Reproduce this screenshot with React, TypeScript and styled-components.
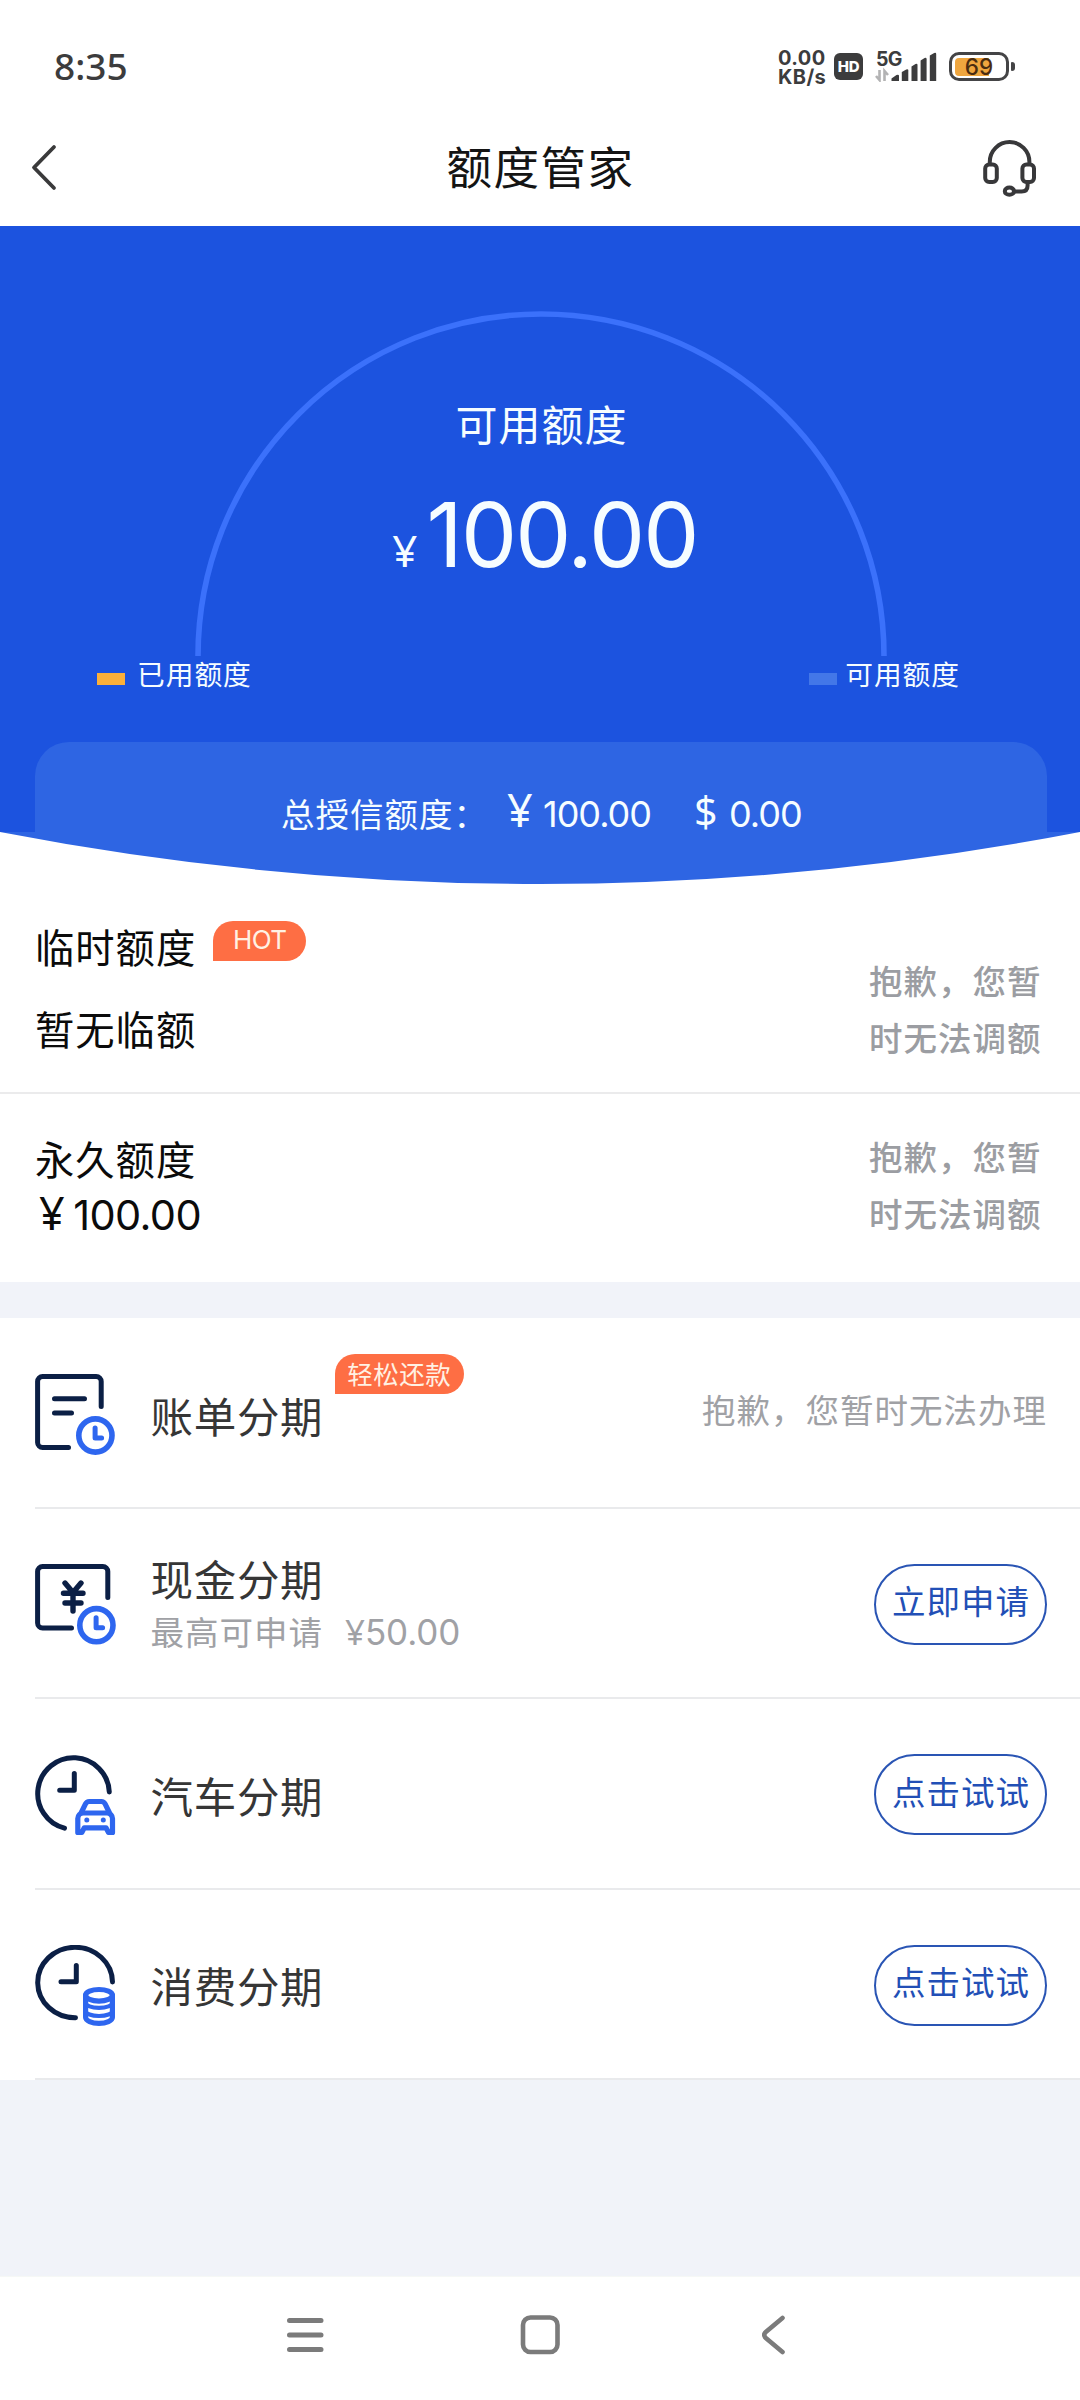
import React from "react";
import styled, { createGlobalStyle } from "styled-components";

const cjk = `"Noto Sans CJK SC", "Noto Sans", sans-serif`;
const latin = `Inter, "Noto Sans", "Noto Sans CJK SC", sans-serif`;

const GlobalStyle = createGlobalStyle`
  * { box-sizing: border-box; }
  body { margin: 0; background: #f1f3f9; }
  svg { display: block; flex: none; }
`;

const Screen = styled.div`
  width: 1080px;
  height: 2400px;
  display: flex;
  flex-direction: column;
  background: #f1f3f9;
  font-family: ${cjk};
  overflow: hidden;
`;

/* ---------- status bar ---------- */
const StatusBar = styled.header`
  height: 112px;
  flex: none;
  display: flex;
  justify-content: space-between;
  background: #fff;
  padding: 45px 65px 0 54px;
  font-family: ${latin};
  color: #3c3c3d;
`;
const Clock = styled.time`
  font: 500 37px/42px "Noto Sans", sans-serif;
`;
const StatusIcons = styled.div`
  display: flex;
  align-items: flex-start;
  height: 44px;
`;
const NetSpeed = styled.div`
  width: 56px;
  padding-top: 4px;
  font: 700 20px/19px ${latin};
  letter-spacing: 0.4px;
  white-space: pre-line;
`;
const HdBadge = styled.div`
  width: 29px;
  height: 27px;
  margin: 8px 12px 0 0;
  border-radius: 6px;
  background: #3c3c3d;
  color: #fff;
  font: 800 15px/27px ${latin};
  letter-spacing: -0.3px;
  text-align: center;
`;
const Signal = styled.div`
  width: 63px;
  display: grid;
  margin-top: 5px;
  margin-right: 11px;
  > * { grid-area: 1 / 1; }
`;
const NetType = styled.span`
  padding-left: 1px;
  font: 700 19.5px/18px ${latin};
  letter-spacing: -0.6px;
`;
const Battery = styled.div`
  display: flex;
  align-items: center;
  gap: 2px;
  margin-top: 7px;
`;
const BatteryShell = styled.div`
  width: 60px;
  height: 29px;
  border: 3px solid #444446;
  border-radius: 10px;
  padding: 3px;
  display: grid;
  > * { grid-area: 1 / 1; }
`;
const BatteryFill = styled.div`
  width: 34px;
  border-radius: 4px 0 0 4px;
  background: #efa63f;
`;
const BatteryText = styled.span`
  text-align: center;
  font: 500 22.5px/18px ${latin};
  color: #4a2c10;
`;
const BatteryNub = styled.div`
  width: 4px;
  height: 9px;
  border-radius: 1px 3px 3px 1px;
  background: #444446;
`;

/* ---------- title bar ---------- */
const TitleBar = styled.nav`
  height: 114px;
  flex: none;
  display: flex;
  align-items: flex-start;
  justify-content: space-between;
  background: #fff;
  padding: 28px 43px 0 31px;
`;
const TitleSide = styled.div<{ $end?: boolean; $drop: number }>`
  width: 60px;
  display: flex;
  justify-content: ${(p) => (p.$end ? "flex-end" : "flex-start")};
  padding-top: ${(p) => p.$drop}px;
`;
const Title = styled.h1`
  margin: 0 0 0 13px;
  font: 400 45.5px/50px ${cjk};
  letter-spacing: 1.5px;
  color: #141414;
`;

/* ---------- hero ---------- */
const Hero = styled.section`
  height: 658px;
  flex: none;
  display: flex;
  flex-direction: column;
  background: #1c53df;
  color: #f6fdff;
`;
const Gauge = styled.div`
  width: 692px;
  height: 345px;
  margin: 85px 0 0 195px;
  display: grid;
  > * { grid-area: 1 / 1; }
`;
const GaugeText = styled.div`
  display: flex;
  flex-direction: column;
  align-items: center;
  padding-top: 82px;
`;
const GaugeLabel = styled.div`
  font: 400 42px/60px ${cjk};
  letter-spacing: 1px;
  margin-left: 1px;
`;
const GaugeAmount = styled.div`
  display: flex;
  align-items: baseline;
  gap: 9px;
  margin: 37px 0 0 8px;
  font: 400 89px/90px ${latin};
  letter-spacing: -1.8px;
`;
const GaugeSign = styled.span`
  font: 400 44px/44px "Noto Sans", sans-serif;
  letter-spacing: 0;
`;
const Legend = styled.div`
  height: 36px;
  display: flex;
  justify-content: space-between;
  padding: 0 120px 0 97px;
`;
const LegendItem = styled.div<{ $gap: number }>`
  display: flex;
  align-items: center;
  gap: ${(p) => p.$gap}px;
  font: 400 27.7px/34px ${cjk};
  letter-spacing: 1px;
`;
const LegendLabel = styled.span`
  padding-bottom: 2px;
`;
const Swatch = styled.i<{ $color: string }>`
  width: 28px;
  height: 12px;
  margin-top: 10px;
  background: ${(p) => p.$color};
`;
const TotalPanel = styled.div`
  width: 1012px;
  height: 90px;
  margin: 50px 0 0 35px;
  border-radius: 34px 34px 0 0;
  background: #2e65e3;
  padding: 47px 0 0 246px;
  display: flex;
  align-items: baseline;
  white-space: nowrap;
`;
const TotalLabel = styled.span`
  width: 226px;
  font: 400 33.5px/44px ${cjk};
  letter-spacing: 1px;
`;
const TotalSign = styled.span<{ $width: number; $size: number }>`
  width: ${(p) => p.$width}px;
  font: 400 ${(p) => p.$size}px/42px "Noto Sans", sans-serif;
`;
const TotalValue = styled.span<{ $width: number }>`
  width: ${(p) => p.$width}px;
  font: 400 36px/44px ${latin};
  letter-spacing: -1px;
`;

/* ---------- credit rows ---------- */
const CreditRow = styled.section<{ $height: number; $line?: boolean }>`
  height: ${(p) => p.$height}px;
  flex: none;
  display: flex;
  justify-content: space-between;
  background: #fff;
  padding: 0 36px 0 35px;
  border-bottom: ${(p) => (p.$line ? "2px solid #ebebec" : "none")};
`;
const CreditInfo = styled.div<{ $top: number; $gap: number }>`
  display: flex;
  flex-direction: column;
  gap: ${(p) => p.$gap}px;
  padding-top: ${(p) => p.$top}px;
`;
const CreditHead = styled.div`
  display: flex;
`;
const CreditText = styled.div`
  font: 400 39.3px/56px ${cjk};
  letter-spacing: 1px;
  color: #0b0b0b;
`;
const CreditAmount = styled.div`
  display: flex;
  align-items: baseline;
  gap: 9px;
  padding-left: 4px;
  font: 400 41.5px/56px ${latin};
  letter-spacing: -0.6px;
  color: #0b0b0b;
`;
const Yen = styled.span<{ $size: number }>`
  font: 400 ${(p) => p.$size}px/1 "Noto Sans", sans-serif;
`;
const Tag = styled.span<{ $width: number; $latin?: boolean }>`
  width: ${(p) => p.$width}px;
  height: 40px;
  flex: none;
  border-radius: 20px 20px 20px 0;
  background: #fe6e44;
  color: #fff1e3;
  text-align: center;
  font: ${(p) => (p.$latin ? `400 26px/38px ${latin}` : `400 25.5px/37px ${cjk}`)};
  letter-spacing: ${(p) => (p.$latin ? "-0.6px" : "0.5px")};
`;
const HeadTag = styled(Tag)`
  margin: 3px 0 0 17px;
`;
const Sorry = styled.p<{ $top: number }>`
  width: 175px;
  margin: ${(p) => p.$top}px 0 0;
  font: 500 33.5px/57px ${cjk};
  letter-spacing: 1px;
  color: #9b9da2;
`;

/* ---------- instalment list ---------- */
const List = styled.section`
  flex: none;
  margin-top: 36.4px;
  background: #fff;
`;
const Row = styled.div`
  height: 190.4px;
  padding-left: 35px;
`;
const RowBody = styled.div`
  height: 100%;
  display: flex;
  align-items: center;
  padding: 3px 33px 0 0;
  border-bottom: 2px solid #e9eaec;
`;
const RowText = styled.div<{ $shift: number }>`
  margin: ${(p) => p.$shift}px auto 0 34.5px;
`;
const RowTitle = styled.h2`
  margin: 0;
  display: flex;
  font: 400 42.5px/54px ${cjk};
  letter-spacing: 0.7px;
  color: #363636;
`;
const RowTag = styled(Tag)`
  margin: -34px 0 0 11.5px;
`;
const RowSub = styled.div`
  display: flex;
  align-items: baseline;
  margin-top: 1px;
  font: 400 33.5px/50px ${cjk};
  letter-spacing: 1px;
  color: #a0a1a5;
`;
const SubAmount = styled.span`
  margin-left: 22px;
  font: 400 35px/40px ${latin};
  letter-spacing: -0.1px;
`;
const RowNote = styled.span`
  margin-top: -11px;
  font: 400 33.5px/50px ${cjk};
  letter-spacing: 1px;
  color: #a0a1a5;
`;
const Pill = styled.button`
  width: 173px;
  height: 81px;
  padding: 0 0 8px 1px;
  border: 2px solid #2a55b4;
  border-radius: 41px;
  background: #fff;
  font: 400 33.5px/50px ${cjk};
  letter-spacing: 1px;
  color: #224fb6;
`;

/* ---------- system navigation ---------- */
const SystemNav = styled.footer`
  height: 124px;
  margin-top: auto;
  flex: none;
  display: flex;
  justify-content: space-between;
  background: #fff;
  border-top: 1px solid #f6f8f6;
  padding: 38px 293px 0 286px;
`;
const HomeSlot = styled.div`
  margin-right: 6px;
`;

const navy = "#0b1f45";
const blue = "#2e66ef";

const MiniClock = ({ x, y }: { x: number; y: number }) => (
  <g stroke={blue} fill="none" strokeLinecap="round" strokeLinejoin="round">
    <circle cx={x} cy={y} r="16.6" strokeWidth="5.6" />
    <path d={`M${x - 0.3} ${y - 7.5}v10h6.500`} strokeWidth="5" />
  </g>
);

const RowSvg = ({ children }: { children: React.ReactNode }) => (
  <svg width="81" height="81" viewBox="0 0 81 81" fill="none" stroke={navy} strokeWidth="5" strokeLinecap="round" strokeLinejoin="round">
    {children}
  </svg>
);

const BillIcon = () => (
  <RowSvg>
    <path d="M66.2 32.500V7.500a5 5 0 0 0-5-5H7.600a5 5 0 0 0-5 5v61a5 5 0 0 0 5 5H33.500" />
    <path d="M19.500 24.700h30M19.500 39h17" />
    <MiniClock x={60.4} y={61.5} />
  </RowSvg>
);

const CashIcon = () => (
  <RowSvg>
    <path d="M72.800 33.500V7.500a5 5 0 0 0-5-5H7.600a5 5 0 0 0-5 5V59a5 5 0 0 0 5 5H36.500" />
    <path d="M30 19l8 9.500L46 19M28.500 29.300h19.500M30 39h16M38 29.300V47" strokeWidth="5.400" />
    <MiniClock x={61.4} y={61.2} />
  </RowSvg>
);

const CarIcon = () => (
  <RowSvg>
    <path d="M74.300 38A35.800 35.800 0 1 0 29.500 74.200" />
    <path d="M39.300 19.500v16.800H24.700" />
    <g stroke={blue} strokeWidth="5.200">
      <path d="M46.300 58.500l4.200-8.600q1.200-2.400 3.800-2.400h12q2.600 0 3.800 2.400l4.200 8.600" />
      <path d="M42.800 78.400V64.500a5.500 5.500 0 0 1 5.500-5.500h23.700a5.500 5.500 0 0 1 5.500 5.500v13.900h-4L71 73.800H49.300l-2.500 4.600z" />
    </g>
    <circle cx="51.800" cy="66" r="2.500" fill={blue} stroke="none" />
    <circle cx="68.300" cy="66" r="2.500" fill={blue} stroke="none" />
  </RowSvg>
);

const CoinsIcon = () => (
  <RowSvg>
    <path d="M77.500 37A37.400 35.200 0 1 0 40.500 72.700" />
    <path d="M41.300 20.500v16.200H26" />
    <g stroke={blue} strokeWidth="5.200">
      <ellipse cx="64" cy="50.300" rx="13.400" ry="5.800" />
      <path d="M50.600 50.300v22c0 3.400 6 6 13.400 6s13.400-2.600 13.400-6V50.300" />
      <path d="M50.600 57.500c0 3.300 6 5.300 13.400 5.300s13.400-2 13.400-5.300M50.600 65.700c0 3.300 6 5.300 13.400 5.300s13.400-2 13.400-5.300" strokeWidth="4.200" />
    </g>
  </RowSvg>
);

const HeadsetIcon = () => (
  <svg width="54" height="57" viewBox="0 0 54 57" fill="none" stroke="#38383a" strokeWidth="4" strokeLinecap="round" strokeLinejoin="round">
    <path d="M6.8 24V21.8a19.6 19.6 0 0 1 39.6 0V24" />
    <rect x="2.2" y="24.4" width="11.6" height="17.6" rx="4" />
    <rect x="39.4" y="24.4" width="11.6" height="17.6" rx="4" />
    <path d="M44.6 42.4v3.2q0 6-6 6H32" />
    <ellipse cx="26.4" cy="51.2" rx="4.6" ry="3.6" />
  </svg>
);

export default function App() {
  return (
    <Screen>
      <GlobalStyle />
      <StatusBar>
        <Clock>8:35</Clock>
        <StatusIcons>
          <NetSpeed>{"0.00\nKB/s"}</NetSpeed>
          <HdBadge>HD</HdBadge>
          <Signal>
            <NetType>5G</NetType>
            <svg width="63" height="32" viewBox="0 0 63 32">
              <g fill="#3c3c3d">
                <path d="M16.500 31v-2.500l5-3.500q2.500-1 2.500 1v5z" />
                <path d="M26.800 31v-9l4.500-2.500q2-.6 2 1v10.500z" />
                <path d="M36.500 31V16.500l4-2.500q2-.6 2 1v16z" />
                <path d="M45.600 31V10.500l4-2.500q2-.6 2 1v22z" />
                <path d="M54.800 31V5.500l4.400-2.500q2-.6 2 1v27z" />
              </g>
              <path d="M1 26l3.500 4V20M13 25l-3.500-4v10" fill="none" stroke="#b3b3b4" strokeWidth="2.6" />
            </svg>
          </Signal>
          <Battery>
            <BatteryShell>
              <BatteryFill />
              <BatteryText>69</BatteryText>
            </BatteryShell>
            <BatteryNub />
          </Battery>
        </StatusIcons>
      </StatusBar>

      <TitleBar>
        <TitleSide $drop={4}>
          <svg width="27" height="48" viewBox="0 0 27 48" fill="none" stroke="#3a3a3b" strokeWidth="3.8" strokeLinecap="round" strokeLinejoin="round">
            <path d="M23 3L3 23.500L23 44" />
          </svg>
        </TitleSide>
        <Title>额度管家</Title>
        <TitleSide $end $drop={0}>
          <HeadsetIcon />
        </TitleSide>
      </TitleBar>

      <Hero>
        <Gauge>
          <svg width="692" height="345" viewBox="0 0 692 345" fill="none">
            <path d="M3 345A343 342 0 0 1 689 345" stroke="#3b71fb" strokeWidth="5.6" />
          </svg>
          <GaugeText>
            <GaugeLabel>可用额度</GaugeLabel>
            <GaugeAmount>
              <GaugeSign>¥</GaugeSign>
              <span>100.00</span>
            </GaugeAmount>
          </GaugeText>
        </Gauge>
        <Legend>
          <LegendItem $gap={12}>
            <Swatch $color="#fbb03a" />
            <LegendLabel>已用额度</LegendLabel>
          </LegendItem>
          <LegendItem $gap={8}>
            <Swatch $color="#4377e8" />
            <LegendLabel>可用额度</LegendLabel>
          </LegendItem>
        </Legend>
        <TotalPanel>
          <TotalLabel>总授信额度：</TotalLabel>
          <TotalSign $width={36} $size={45}>¥</TotalSign>
          <TotalValue $width={151}>100.00</TotalValue>
          <TotalSign $width={35} $size={41}>$</TotalSign>
          <TotalValue $width={80}>0.00</TotalValue>
        </TotalPanel>
        <svg width="1080" height="52" viewBox="0 0 1080 52">
          <path d="M0 0H1080V52H0z" fill="#fff" />
          <path d="M0 0Q540 104 1080 0z" fill="#2e65e3" />
        </svg>
      </Hero>

      <CreditRow $height={210} $line>
        <CreditInfo $top={34} $gap={26}>
          <CreditHead>
            <CreditText>临时额度</CreditText>
            <HeadTag $width={93} $latin>HOT</HeadTag>
          </CreditHead>
          <CreditText>暂无临额</CreditText>
        </CreditInfo>
        <Sorry $top={67}>抱歉，您暂时无法调额</Sorry>
      </CreditRow>
      <CreditRow $height={188}>
        <CreditInfo $top={36} $gap={1}>
          <CreditText>永久额度</CreditText>
          <CreditAmount>
            <Yen $size={45}>¥</Yen>
            <span>100.00</span>
          </CreditAmount>
        </CreditInfo>
        <Sorry $top={33}>抱歉，您暂时无法调额</Sorry>
      </CreditRow>

      <List>
        <Row>
          <RowBody>
            <BillIcon />
            <RowText $shift={2}>
              <RowTitle>
                账单分期
                <RowTag $width={129}>轻松还款</RowTag>
              </RowTitle>
            </RowText>
            <RowNote>抱歉，您暂时无法办理</RowNote>
          </RowBody>
        </Row>
        <Row>
          <RowBody>
            <CashIcon />
            <RowText $shift={-1}>
              <RowTitle>现金分期</RowTitle>
              <RowSub>
                最高可申请
                <SubAmount>
                  <Yen $size={35}>¥</Yen>50.00
                </SubAmount>
              </RowSub>
            </RowText>
            <Pill>立即申请</Pill>
          </RowBody>
        </Row>
        <Row>
          <RowBody>
            <CarIcon />
            <RowText $shift={0}>
              <RowTitle>汽车分期</RowTitle>
            </RowText>
            <Pill>点击试试</Pill>
          </RowBody>
        </Row>
        <Row>
          <RowBody>
            <CoinsIcon />
            <RowText $shift={0}>
              <RowTitle>消费分期</RowTitle>
            </RowText>
            <Pill>点击试试</Pill>
          </RowBody>
        </Row>
      </List>

      <SystemNav>
        <svg width="39" height="42" viewBox="0 0 39 42" stroke="#7b7b7b" strokeWidth="5" strokeLinecap="round">
          <path d="M3.500 5.500h31.500M3.500 20h31.500M3.500 34.500h31.500" />
        </svg>
        <HomeSlot>
          <svg width="41" height="42" viewBox="0 0 41 42" fill="none" stroke="#7b7b7b" strokeWidth="4.6">
            <rect x="3" y="2.5" width="34.5" height="34.5" rx="7.5" />
          </svg>
        </HomeSlot>
        <svg width="26" height="42" viewBox="0 0 26 42" fill="none" stroke="#7b7b7b" strokeWidth="4.6" strokeLinecap="round">
          <path d="M21.500 3L4.800 17q-3.200 3 0 6L21.500 37" />
        </svg>
      </SystemNav>
    </Screen>
  );
}
